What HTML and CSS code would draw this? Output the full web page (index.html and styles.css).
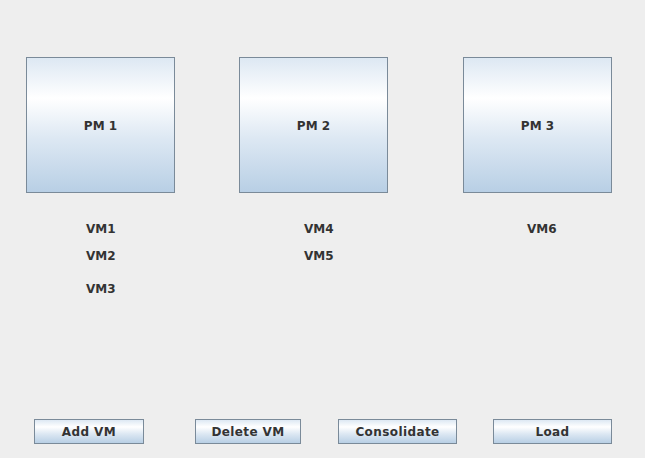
FILE: index.html
```html
<!DOCTYPE html>
<html>
<head>
<meta charset="utf-8">
<link rel="stylesheet" href="styles.css">
</head>
<body>
<div class="frame">
  <div class="pms">
    <div class="pm pm1">PM 1</div>
    <div class="pm pm2">PM 2</div>
    <div class="pm pm3">PM 3</div>
  </div>
  <div class="vms">
    <div class="col col1">
      <div class="vm first">VM1</div>
      <div class="vm second">VM2</div>
      <div class="vm third">VM3</div>
    </div>
    <div class="col col2">
      <div class="vm first">VM4</div>
      <div class="vm second">VM5</div>
    </div>
    <div class="col col3">
      <div class="vm first">VM6</div>
    </div>
  </div>
  <div class="buttons">
    <button class="btn btn-add">Add VM</button>
    <button class="btn btn-del">Delete VM</button>
    <button class="btn btn-cons">Consolidate</button>
    <button class="btn btn-load">Load</button>
  </div>
</div>
</body>
</html>
```
FILE: styles.css
```css
html, body {
  margin: 0;
  padding: 0;
  background: #eeeeee;
}
.frame {
  width: 645px;
  height: 458px;
  box-sizing: border-box;
  display: flex;
  flex-direction: column;
  padding-top: 57px;
  padding-bottom: 14px;
  font-family: "DejaVu Sans", sans-serif;
  font-weight: bold;
  font-size: 12px;
  color: #333333;
}
.pms {
  display: flex;
}
.pm {
  width: 149px;
  height: 136px;
  box-sizing: border-box;
  border: 1px solid #7a8a99;
  padding-top: 2px;
  background: linear-gradient(to bottom, #dde8f3 0%, #ffffff 30%, #dde8f3 60%, #b8cfe5 100%);
  display: flex;
  align-items: center;
  justify-content: center;
}
.pm1 { margin-left: 26px; }
.pm2 { margin-left: 64px; }
.pm3 { margin-left: 75px; }

.vms {
  display: grid;
  grid-template-columns: 218px 223px auto;
  padding-left: 86px;
}
.vm {
  line-height: 15px;
  height: 15px;
}
.vm.first { margin-top: 29px; }
.vm.second { margin-top: 12px; }
.vm.third { margin-top: 18px; }

.buttons {
  margin-top: auto;
  display: flex;
}
.btn {
  height: 25px;
  box-sizing: border-box;
  border: 1px solid #7a8a99;
  border-radius: 0;
  padding: 0;
  margin: 0;
  background: linear-gradient(to bottom, #dde8f3 0%, #ffffff 30%, #dde8f3 60%, #b8cfe5 100%);
  font-family: "DejaVu Sans", sans-serif;
  font-weight: bold;
  font-size: 12px;
  letter-spacing: 0.4px;
  color: #333333;
  text-align: center;
}
.btn-add { width: 110px; margin-left: 34px; }
.btn-del { width: 106px; margin-left: 51px; }
.btn-cons { width: 119px; margin-left: 37px; }
.btn-load { width: 119px; margin-left: 36px; }
```
